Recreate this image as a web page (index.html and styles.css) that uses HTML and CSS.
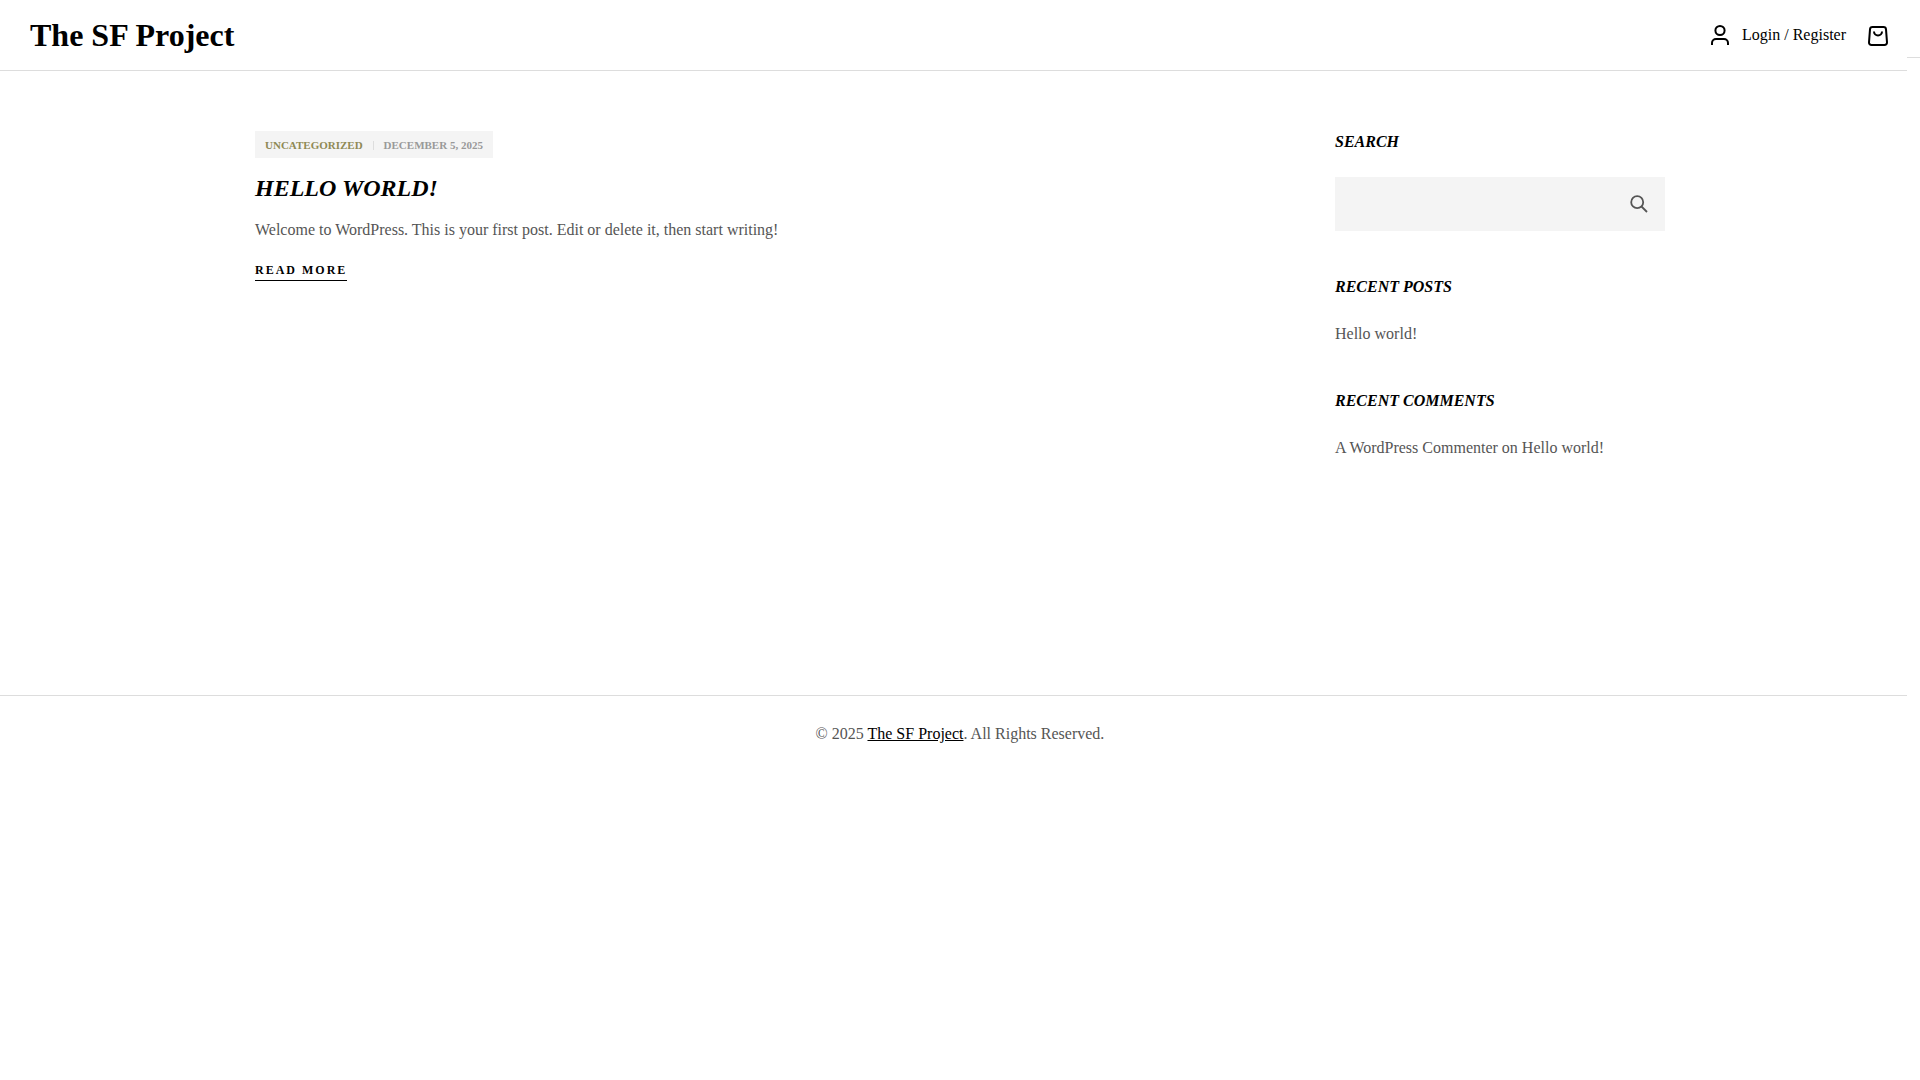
FILE: index.html
```
<!DOCTYPE html>
<html lang="en">
<head>
<meta charset="UTF-8">
<meta name="viewport" content="width=device-width, initial-scale=1">
<title>The SF Project</title>
<link rel="stylesheet" href="styles.css">
</head>
<body>

<!-- HEADER -->
<header class="site-header">
  <a href="#" class="logo">The SF Project</a>
  <div class="header-tools">
    <a href="#" class="account">
      <svg width="24" height="24" viewBox="0 0 24 24" fill="none" stroke="currentColor" stroke-width="2">
        <circle cx="12" cy="7.5" r="4.6"/>
        <path d="M4 22v-2a4 4 0 0 1 4-4h8a4 4 0 0 1 4 4v2"/>
      </svg>
      Login / Register
    </a>
    <a href="#" class="bag" aria-label="Cart">
      <svg width="24" height="24" viewBox="0 0 24 24" fill="none" stroke="currentColor" stroke-width="2">
        <path d="M6.500 4h11a2.500 2.500 0 0 1 2.500 2.300l1 13a2.500 2.500 0 0 1-2.500 2.700h-13a2.500 2.500 0 0 1-2.500-2.700l1-13a2.500 2.500 0 0 1 2.500-2.300z"/>
        <path d="M8 8.500a4 4 0 0 0 8 0"/>
      </svg>
    </a>
  </div>
</header>

<!-- CONTENT -->
<div class="container">
  <main class="posts">
    <article class="post">
      <div class="post-meta">
        <a href="#" class="category">Uncategorized</a>
        <time datetime="2025-12-05">December 5, 2025</time>
      </div>
      <h2><a href="#">Hello world!</a></h2>
      <p>Welcome to WordPress. This is your first post. Edit or delete it, then start writing!</p>
      <a href="#" class="read-more">Read more</a>
    </article>
  </main>

  <aside class="sidebar">
    <section class="widget">
      <h3><label for="search">Search</label></h3>
      <form class="search-form">
        <input type="text" id="search" name="s">
        <button type="submit" aria-label="Search">
          <svg width="18" height="18" viewBox="0 0 18 18" fill="none" stroke="currentColor" stroke-width="1.8">
            <circle cx="7.2" cy="7.2" r="6"/>
            <path d="M11.500 11.500l5.500 5.500"/>
          </svg>
        </button>
      </form>
    </section>
    <section class="widget">
      <h3>Recent Posts</h3>
      <ul>
        <li><a href="#">Hello world!</a></li>
      </ul>
    </section>
    <section class="widget">
      <h3>Recent Comments</h3>
      <ul>
        <li><a href="#">A WordPress Commenter</a> on <a href="#">Hello world!</a></li>
      </ul>
    </section>
  </aside>
</div>

<!-- FOOTER -->
<footer class="site-footer">
  <p>© 2025 <a href="#">The SF Project</a>. All Rights Reserved.</p>
</footer>

<!-- CART DRAWER (closed) -->
<div class="cart-drawer" aria-hidden="true">
  <div class="drawer-head"></div>
</div>

</body>
</html>
```
FILE: styles.css
```
* {
  box-sizing: border-box;
}
body {
  margin: 0;
  font-family: 'Liberation Serif', 'Times New Roman', serif;
  font-size: 16px;
  line-height: 22px;
  color: #555;
  background: #fff;
}
a {
  color: inherit;
  text-decoration: none;
}
h2, h3, p, ul {
  margin: 0;
  padding: 0;
}
ul {
  list-style: none;
}
svg {
  display: block;
}

/* header */
.site-header {
  display: flex;
  align-items: center;
  justify-content: space-between;
  height: 71px;
  padding: 0 30px;
  border-bottom: 1px solid #ddd;
  color: #000;
}
.logo {
  font-size: 32px;
  font-weight: bold;
  line-height: 40px;
}
.header-tools {
  display: flex;
  align-items: center;
  gap: 20px;
}
.account {
  display: flex;
  align-items: center;
  gap: 10px;
}

/* content */
.container {
  display: flex;
  justify-content: space-between;
  gap: 30px;
  max-width: 1410px;
  min-height: 624px;
  margin: 0 auto;
  padding-top: 60px;
}
.posts {
  flex: 1;
}
.post {
  display: flex;
  flex-direction: column;
  align-items: flex-start;
}
.post-meta {
  display: flex;
  align-items: center;
  padding: 1px 10px 0;
  background: #f4f4f4;
  font-size: 11px;
  font-weight: bold;
  line-height: 26px;
  text-transform: uppercase;
  color: #999;
}
.category {
  color: #8f8a55;
}
.post-meta time {
  display: flex;
  align-items: center;
}
.post-meta time::before {
  content: "";
  width: 1px;
  height: 9px;
  margin: 0 10px;
  background: #ddd;
}
.post h2 {
  margin: 14px 0;
  font-size: 24px;
  font-style: italic;
  line-height: 32px;
  text-transform: uppercase;
  color: #000;
}
.post p {
  line-height: 24px;
}
.read-more {
  margin-top: 18px;
  border-bottom: 1px solid #000;
  font-size: 12px;
  font-weight: bold;
  line-height: 20px;
  letter-spacing: 2px;
  text-transform: uppercase;
  color: #000;
}

/* sidebar */
.sidebar {
  width: 330px;
}
.widget {
  margin-bottom: 45px;
}
.widget h3 {
  margin-bottom: 24px;
  font-size: 16px;
  font-style: italic;
  text-transform: uppercase;
  color: #000;
}
.widget li {
  line-height: 23px;
}
.search-form {
  display: flex;
  height: 54px;
  background: #f4f4f4;
}
.search-form input {
  flex: 1;
  min-width: 0;
  padding: 0 20px;
  border: none;
  background: none;
  font: inherit;
  color: inherit;
}
.search-form button {
  display: flex;
  align-items: center;
  padding: 0 17px;
  border: none;
  background: none;
  color: #555;
  cursor: pointer;
}

/* footer */
.site-footer {
  padding: 27px 30px;
  border-top: 1px solid #ddd;
  text-align: center;
}
.site-footer a {
  color: #000;
  text-decoration: underline;
}

/* drawer stays off screen, its edge shows */
.cart-drawer {
  position: fixed;
  top: 0;
  right: -387px;
  width: 400px;
  height: 100%;
  background: #fff;
}
.drawer-head {
  height: 58px;
  border-bottom: 1px solid #ddd;
}
```
